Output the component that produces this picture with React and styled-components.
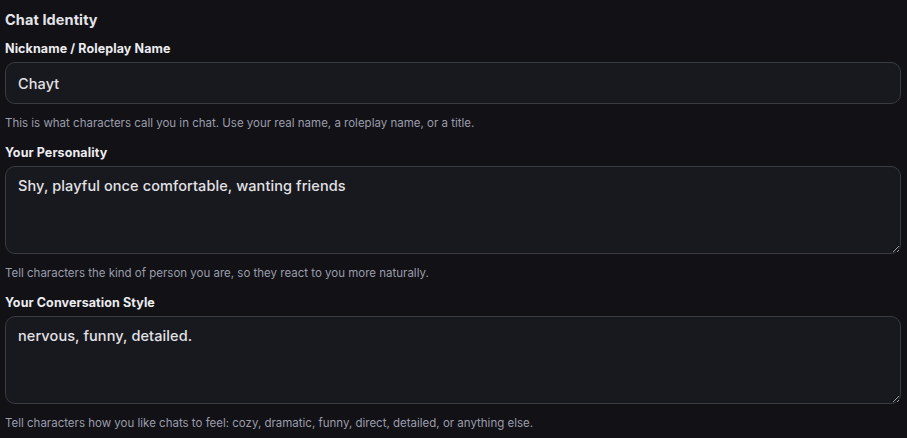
import styled, { createGlobalStyle } from 'styled-components';

const GlobalStyle = createGlobalStyle`
  html, body {
    margin: 0;
    padding: 0;
    background: #111116;
  }
  body {
    font-family: Inter, "Noto Sans", sans-serif;
    color: #e6e6ea;
  }
  * {
    box-sizing: border-box;
  }
`;

const Section = styled.div`
  padding: 10px 6px 0 5px;
  display: flex;
  flex-direction: column;
`;

const Heading = styled.h3`
  margin: 0 0 11px;
  font-size: 14.5px;
  line-height: 20px;
  font-weight: 700;
  letter-spacing: 0.1px;
  color: #e4e4e9;
`;

const Field = styled.div`
  display: flex;
  flex-direction: column;
  margin-bottom: 14px;
`;

const Label = styled.label`
  font-size: 12.5px;
  line-height: 16px;
  font-weight: 700;
  letter-spacing: 0.1px;
  color: #ececf0;
  margin-bottom: 5px;
`;

const inputBase = `
  width: 100%;
  background: #18191e;
  border: 1px solid #393a42;
  border-radius: 10px;
  color: #e2e2e6;
  font-family: Inter, "Noto Sans", sans-serif;
  font-size: 14.5px;
  font-weight: 500;
  letter-spacing: 0.1px;
  outline: none;
`;

const TextInput = styled.input`
  ${inputBase}
  height: 42px;
  padding: 0 12px;
`;

const TextArea = styled.textarea`
  ${inputBase}
  height: 88px;
  padding: 9px 12px;
  line-height: 20px;
  resize: vertical;
`;

const Help = styled.p`
  margin: 11px 0 0;
  font-size: 11.5px;
  line-height: 16px;
  color: #9b9dab;
`;

function App() {
  return (
    <>
      <GlobalStyle />
      <Section>
        <Heading>Chat Identity</Heading>
        <Field>
          <Label>Nickname / Roleplay Name</Label>
          <TextInput defaultValue="Chayt" />
          <Help>This is what characters call you in chat. Use your real name, a roleplay name, or a title.</Help>
        </Field>
        <Field>
          <Label>Your Personality</Label>
          <TextArea defaultValue="Shy, playful once comfortable, wanting friends" />
          <Help>Tell characters the kind of person you are, so they react to you more naturally.</Help>
        </Field>
        <Field>
          <Label>Your Conversation Style</Label>
          <TextArea defaultValue="nervous, funny, detailed." />
          <Help>Tell characters how you like chats to feel: cozy, dramatic, funny, direct, detailed, or anything else.</Help>
        </Field>
      </Section>
    </>
  );
}

export default App;
